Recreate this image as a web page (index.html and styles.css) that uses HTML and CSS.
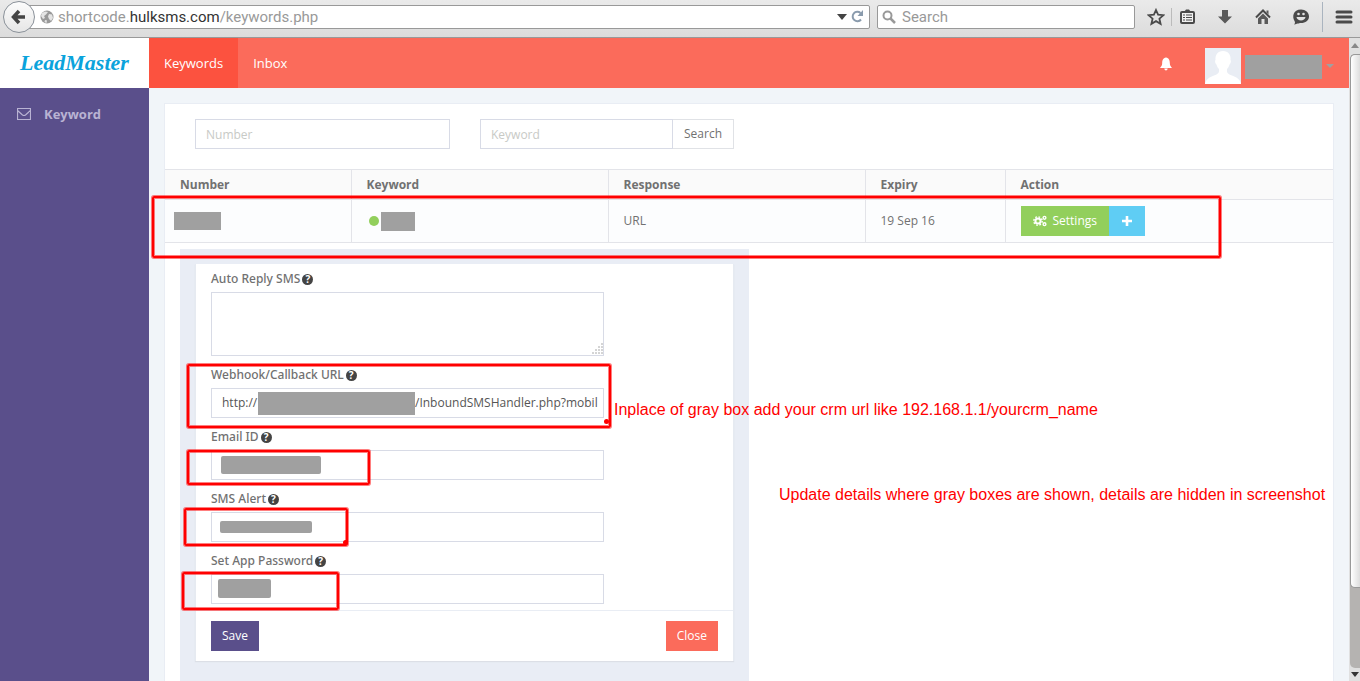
FILE: index.html
```html
<!DOCTYPE html>
<html lang="en">
	<head>
		<meta charset="utf-8">
		<title>Keywords</title>
		<link rel="stylesheet" href="styles.css">
	</head>
	<body>
		<!-- browser toolbar -->
		<div class="toolbar">
			<button class="back" aria-label="Back">
				<svg width="16" height="16" viewBox="0 0 16 16"><path d="M8 2L2.500 8L8 14M3 8H14" fill="none" stroke="#444" stroke-width="3.500"/></svg>
			</button>
			<div class="address">
				<svg width="14" height="14" viewBox="0 0 14 14"><circle cx="7" cy="7" r="6.500" fill="#999"/><path d="M2 3L5 1.500L8 2L6 4.500L4 6L5 8L3 9L1 6ZM9 4L12 4.500L13 8L11 11L9 9L8 6.500ZM5 10L7 10.500L6.500 13L4.500 12Z" fill="#e4e4e4"/></svg>
				<span class="url">shortcode.<b>hulksms.com</b>/keywords.php</span>
				<svg width="10" height="6" viewBox="0 0 10 6"><path d="M0 0H10L5 6Z" fill="#444"/></svg>
				<svg width="13" height="13" viewBox="0 0 13 13"><path d="M10 9.500A4.700 4.700 0 1 1 9.500 3" fill="none" stroke="#8a9bad" stroke-width="2"/><path d="M12 0V6H6.500Z" fill="#8a9bad"/></svg>
			</div>
			<div class="search">
				<svg width="14" height="14" viewBox="0 0 14 14"><circle cx="5.500" cy="5.500" r="4" fill="none" stroke="#999" stroke-width="2"/><path d="M8.500 8.500L13 13" stroke="#999" stroke-width="2.500"/></svg>
				<input type="text" placeholder="Search" aria-label="Web search">
			</div>
			<div class="tools">
				<svg width="18" height="18" viewBox="0 0 18 18"><path d="M9 2L11.100 6.700L16.300 7.200L12.400 10.700L13.600 15.800L9 13.100L4.400 15.800L5.600 10.700L1.700 7.200L6.900 6.700Z" fill="none" stroke="#4a4a4a" stroke-width="1.800"/></svg>
				<i class="sep"></i>
				<svg width="18" height="18" viewBox="0 0 18 18"><rect x="3" y="4" width="13" height="11" rx="1" fill="#f0f0f0" stroke="#4a4a4a" stroke-width="2"/><path d="M6 4L8 1.500H11L13 4Z" fill="#4a4a4a"/><path d="M5 7H7M8 7H14M5 9.500H7M8 9.500H14M5 12H7M8 12H14" stroke="#4a4a4a" stroke-width="1.200"/></svg>
				<svg width="18" height="18" viewBox="0 0 18 18"><path d="M6 2H12V8.500H16L9 15.500L2 8.500H6Z" fill="#5a5a5a"/></svg>
				<svg width="18" height="18" viewBox="0 0 18 18"><path d="M2 9.500L9 2.500L16 9.500" fill="none" stroke="#4a4a4a" stroke-width="2"/><path d="M4 10.500L9 5.500L14 10.500V16H10.500V11H7.500V16H4ZM12.500 2.500H14.500V6.500L12.500 4.500Z" fill="#5a5a5a"/></svg>
				<svg width="18" height="18" viewBox="0 0 18 18"><path d="M9 1.500C13.500 1.500 17 4.500 17 8.500C17 12.500 13.500 15 9 15C7.500 15 6.500 15.500 2 16.500C3.500 15 3 14 2.500 13C0 9 1 1.500 9 1.500Z" fill="#4a4a4a"/><circle cx="6.500" cy="6" r="1.300" fill="#e2e2e2"/><circle cx="11.500" cy="6" r="1.300" fill="#e2e2e2"/><path d="M4.500 9H13.500C13 13.500 5 13.500 4.500 9Z" fill="#e2e2e2"/></svg>
				<i class="sep tall"></i>
				<svg width="18" height="18" viewBox="0 0 18 18"><path d="M2 4H16M2 9H16M2 14H16" stroke="#4a4a4a" stroke-width="3" stroke-linecap="round"/></svg>
			</div>
		</div>

		<div class="page">
			<div class="app">
				<header class="header">
					<a class="logo" href="#">LeadMaster</a>
					<nav class="nav">
						<a class="active" href="#">Keywords</a>
						<a href="#">Inbox</a>
					</nav>
					<div class="user">
						<svg class="bell" width="14" height="14" viewBox="0 0 14 14"><path d="M7 0.500C10 1 10.800 3.500 10.800 6C10.800 8.500 12 9.500 13 11H1C2 9.500 3.200 8.500 3.200 6C3.200 3.500 4 1 7 0.500ZM5.300 11.500H8.700C8.500 14 5.500 14 5.300 11.500Z" fill="#fff"/></svg>
						<svg width="36" height="36" viewBox="0 0 36 36"><path d="M0 0H36V36H0Z" fill="#e9edf4"/><path d="M18 3C23.500 3 26 7 25.500 12C26.500 13 25.500 16 24.500 16.500C24 19 23 20 22 21C21.500 25 23 26 27 27.500C32 29.500 35 31 36 36H0C1 31 4 29.500 9 27.500C13 26 14.500 25 14 21C13 20 12 19 11.500 16.500C10.500 16 9.500 13 10.500 12C10 7 12.500 3 18 3Z" fill="#fff"/></svg>
						<span class="hidden name"></span>
						<i class="caret"></i>
					</div>
				</header>

				<div class="body">
					<aside class="sidebar">
						<a href="#">
							<svg width="14" height="12" viewBox="0 0 14 12"><path d="M0.500 0.500H13.500V11.500H0.500ZM0.500 2.500L5.500 7Q7 8 8.500 7L13.500 2.500" fill="none" stroke="#b9b3d3" stroke-width="1.200"/></svg>
							Keyword
						</a>
					</aside>

					<main class="content">
						<section class="card">
							<form class="filter">
								<input class="number" type="text" placeholder="Number" aria-label="Number">
								<div class="group">
									<input type="text" placeholder="Keyword" aria-label="Keyword">
									<button class="btn" type="button">Search</button>
								</div>
							</form>

							<table class="list">
								<colgroup>
									<col class="c1"><col class="c2"><col class="c3"><col class="c4"><col>
								</colgroup>
								<thead>
									<tr><th>Number</th><th>Keyword</th><th>Response</th><th>Expiry</th><th>Action</th></tr>
								</thead>
								<tbody>
									<tr>
										<td class="first"><span class="hidden num"></span></td>
										<td><div class="status"><i class="dot"></i><span class="hidden key"></span></div></td>
										<td>URL</td>
										<td>19 Sep 16</td>
										<td>
											<div class="actions">
												<button class="btn green" type="button">
													<svg width="14" height="12" viewBox="0 0 14 12"><circle cx="5" cy="6" r="2.600" fill="none" stroke="#fff" stroke-width="2"/><circle cx="5" cy="6" r="4.200" fill="none" stroke="#fff" stroke-width="1.400" stroke-dasharray="1.700 1.600"/><circle cx="11.500" cy="2.800" r="1.400" fill="none" stroke="#fff" stroke-width="1.400"/><circle cx="11.500" cy="9.200" r="1.400" fill="none" stroke="#fff" stroke-width="1.400"/></svg>
													Settings
												</button>
												<button class="btn blue" type="button" aria-label="Add">
													<svg width="10" height="10" viewBox="0 0 10 10"><path d="M5 0V10M0 5H10" stroke="#fff" stroke-width="2.600"/></svg>
												</button>
											</div>
										</td>
									</tr>
								</tbody>
							</table>
							<i class="mark mark-row"></i>

							<div class="detail">
								<form class="panel">
									<div class="fields">
										<div class="field">
											<label for="reply">Auto Reply SMS<i class="help">?</i></label>
											<textarea id="reply"></textarea>
											<svg class="grip" width="12" height="12" viewBox="0 0 12 12"><path d="M10 1H12M7 4H9M10 4H12M4 7H6M7 7H9M10 7H12M1 10H3M4 10H6M7 10H9M10 10H12" stroke="#aaa" stroke-width="1"/></svg>
										</div>
										<div class="field">
											<label for="webhook">Webhook/Callback URL<i class="help">?</i></label>
											<div class="hook">
												<input class="host" id="webhook" type="text" value="http://1">
												<span class="hidden crm"></span>
												<input class="path" type="text" value="/InboundSMSHandler.php?mobil" aria-label="Callback path">
											</div>
											<i class="mark mark-hook"></i>
											<p class="note note-hook">Inplace of gray box add your crm url like 192.168.1.1/yourcrm_name</p>
										</div>
										<div class="field">
											<label for="email">Email ID<i class="help">?</i></label>
											<input id="email" type="text">
											<span class="hidden over over-email"></span>
											<i class="mark mark-email"></i>
											<p class="note note-hidden">Update details where gray boxes are shown, details are hidden in screenshot</p>
										</div>
										<div class="field">
											<label for="alert">SMS Alert<i class="help">?</i></label>
											<input id="alert" type="text">
											<span class="hidden over over-alert"></span>
											<i class="mark mark-alert"></i>
										</div>
										<div class="field">
											<label for="pass">Set App Password<i class="help">?</i></label>
											<input id="pass" type="text">
											<span class="hidden over over-pass"></span>
											<i class="mark mark-pass"></i>
										</div>
									</div>
									<div class="footer">
										<button class="btn purple" type="button">Save</button>
										<button class="btn red" type="button">Close</button>
									</div>
								</form>
							</div>
						</section>
					</main>
				</div>
			</div>

			<!-- scrollbar -->
			<div class="scroll">
				<i class="up"></i>
				<div class="track"><div class="thumb"></div></div>
				<i class="down"></i>
			</div>
		</div>
	</body>
</html>
```
FILE: styles.css
```css
* {
	margin: 0;
	padding: 0;
	box-sizing: border-box;
}

body {
	display: flex;
	flex-direction: column;
	height: 100vh;
	overflow: hidden;
	font: 12px/18px "Open Sans", sans-serif;
	color: #717171;
}

a {
	text-decoration: none;
}

button,
input,
textarea {
	font: inherit;
	color: #555;
}

svg {
	flex: none;
}

/* browser toolbar */
.toolbar {
	display: flex;
	align-items: center;
	height: 38px;
	padding: 0 7px 4px 3px;
	background: linear-gradient(#eaeaea, #dcdcdc);
	border-bottom: 1px solid #999;
	flex: none;
}

.back {
	display: flex;
	align-items: center;
	justify-content: center;
	width: 32px;
	height: 32px;
	border: 1px solid #8a9199;
	border-radius: 50%;
	background: linear-gradient(#fcfcfc, #e6e6e6);
	z-index: 1;
}

.address,
.search {
	display: flex;
	align-items: center;
	height: 24px;
	background: #fff;
	border: 1px solid #999;
	border-radius: 2px;
}

.address {
	flex: 1;
	gap: 4px;
	margin-left: -8px;
	padding: 0 5px 0 12px;
}

.url {
	flex: 1;
	font: 15px/20px Roboto, sans-serif;
	color: #999;
}

.url b {
	font-weight: normal;
	color: #333;
}

.search {
	width: 258px;
	margin-left: 7px;
	padding: 0 4px;
	gap: 6px;
}

.search input {
	width: 100%;
	border: 0;
	background: none;
	font: 15px/20px Roboto, sans-serif;
}

.search input::placeholder {
	color: #999;
}

.tools {
	display: flex;
	align-items: center;
	gap: 20px;
	margin-left: 12px;
}

.sep {
	width: 1px;
	height: 18px;
	margin: 0 -14px;
	background: #bbb;
}

.sep.tall {
	height: 30px;
	margin: 0 -8px;
	background: #aab4bf;
}

/* app */
.page {
	display: flex;
	flex: 1;
	min-height: 0;
}

.app {
	display: flex;
	flex-direction: column;
	flex: 1;
	min-width: 0;
}

.header {
	display: flex;
	height: 50px;
	background: #fb6b5b;
	font-size: 13px;
	flex: none;
}

.logo {
	width: 149px;
	background: #fff;
	color: #0aa3dc;
	font: italic bold 22px/50px "Liberation Serif", serif;
	text-align: center;
}

.nav {
	display: flex;
	flex: 1;
}

.nav a {
	padding: 0 15px;
	color: #fff;
	line-height: 50px;
}

.nav .active {
	background: #fc523f;
}

.user {
	display: flex;
	align-items: center;
	padding: 6px 15px 0 0;
}

.bell {
	margin: 0 32px 4px 0;
}

.hidden {
	display: block;
	background: #a0a0a0;
}

.name {
	width: 77px;
	height: 24px;
	margin: 2px 4px 0;
}

.caret {
	border: 4px solid transparent;
	border-top-color: #a0a0a0;
	border-bottom: 0;
}

.body {
	display: flex;
	flex: 1;
	min-height: 0;
}

.sidebar {
	width: 149px;
	background: #5a4f8b;
	flex: none;
}

.sidebar a {
	display: flex;
	align-items: center;
	gap: 13px;
	padding: 16px 17px;
	color: #b9b3d3;
	font-size: 13px;
	font-weight: bold;
	line-height: 20px;
}

.content {
	flex: 1;
	min-width: 0;
	padding: 15px 15px 0;
	background: #f1f5f9;
}

.card {
	position: relative;
	height: 100%;
	background: #fff;
	border: 1px solid #e9edf4;
	border-bottom: 0;
}

.filter {
	display: flex;
	gap: 30px;
	padding: 15px 30px 20px;
}

.filter input,
.field > input,
.field textarea,
.hook {
	height: 30px;
	padding: 0 10px;
	border: 1px solid #d8dbe6;
	background: #fff;
}

.filter input::placeholder {
	color: #c8cac6;
}

.number {
	width: 255px;
}

.group {
	display: flex;
	width: 254px;
}

.group input {
	flex: 1;
	min-width: 0;
}

.btn {
	height: 30px;
	padding: 0 11px;
	border: 0;
	color: #fff;
}

.group .btn {
	border: 1px solid #e0e2e6;
	border-left: 0;
	background: #fff;
	color: #717171;
}

.list {
	width: 100%;
	border-collapse: collapse;
	table-layout: fixed;
}

.c1 {
	width: 186px;
}

.c2,
.c3 {
	width: 257px;
}

.c4 {
	width: 140px;
}

.list th,
.list td {
	height: 30px;
	padding: 0 15px;
	border: 1px solid #e3e4e9;
	border-width: 1px 0 1px 1px;
	text-align: left;
}

.list th {
	background: #fafafa;
}

.list td {
	height: 43px;
	background: #fcfdfe;
}

.list th:first-child,
.list td:first-child {
	border-left: 0;
}

.list .first {
	padding-left: 9px;
}

.num {
	width: 47px;
	height: 18px;
}

.status {
	display: flex;
	align-items: center;
	padding-left: 2px;
	gap: 2px;
}

.dot {
	width: 10px;
	height: 10px;
	border-radius: 50%;
	background: #92cf5c;
}

.key {
	width: 34px;
	height: 19px;
}

.actions {
	display: flex;
}

.green,
.blue {
	display: flex;
	align-items: center;
	gap: 6px;
}

.green {
	padding: 0 12px;
	background: #92cf5c;
}

.blue {
	padding: 0 13px;
	background: #5fcdf4;
}

.purple {
	background: #5a4f8b;
}

.red {
	background: #fb6b5b;
}

/* settings of one keyword */
.detail {
	width: 569px;
	height: 460px;
	margin: 6px 15px 0;
	padding: 15px;
	background: #e9edf5;
}

.panel {
	background: #fff;
	border: 1px solid #e6eaf1;
	border-width: 0 1px;
	box-shadow: 0 1px 1px #dcdfe6;
}

.fields {
	padding: 6px 15px;
}

.field {
	position: relative;
	width: 393px;
	margin-bottom: 10px;
}

.field:last-child {
	margin-bottom: 0;
}

.field label {
	display: flex;
	align-items: center;
	gap: 2px;
	margin-bottom: 4px;
	font-family: "Noto Sans", sans-serif;
	font-weight: 500;
}

.help {
	width: 11px;
	height: 11px;
	border-radius: 50%;
	background: #444;
	color: #fff;
	font: bold 10px/11px "Open Sans", sans-serif;
	text-align: center;
}

.field > input,
.field textarea {
	display: block;
	width: 100%;
}

.field textarea {
	height: 64px;
	resize: none;
}

.grip {
	position: absolute;
	right: 1px;
	bottom: 1px;
}

.hook {
	display: flex;
	align-items: center;
	padding-right: 4px;
}

.hook input {
	border: 0;
	background: none;
}

.host {
	width: 36px;
}

.crm {
	width: 157px;
	height: 23px;
	flex: none;
}

.path {
	flex: 1;
	min-width: 0;
}

.footer {
	display: flex;
	justify-content: space-between;
	padding: 10px 15px;
	border-top: 1px solid #e9edf4;
}

/* marks drawn over the page */
.mark,
.over,
.note {
	position: absolute;
}

.mark {
	border: 2px solid #f00;
	border-radius: 2px;
	box-shadow: 0 0 0 1px rgba(255, 0, 0, .5), inset 0 0 0 1px rgba(255, 0, 0, .5);
}

.over {
	border-radius: 2px;
}

.mark-row {
	left: -13px;
	top: 92px;
	width: 1069px;
	height: 62px;
}

.mark-hook {
	left: -24px;
	top: -2px;
	width: 424px;
	height: 64px;
}

.mark-hook::after,
.mark-alert::after {
	content: "";
	position: absolute;
	right: 0;
	bottom: 2px;
	width: 5px;
	height: 5px;
	border-radius: 50%;
	background: #f00;
}

.mark-alert::after {
	right: -2px;
	bottom: -1px;
}

.mark-email {
	left: -24px;
	top: 22px;
	width: 183px;
	height: 35px;
}

.mark-alert {
	left: -27px;
	top: 18px;
	width: 164px;
	height: 38px;
}

.mark-pass {
	left: -29px;
	top: 20px;
	width: 157px;
	height: 38px;
}

.over-email {
	left: 10px;
	top: 28px;
	width: 100px;
	height: 18px;
}

.over-alert {
	left: 9px;
	top: 31px;
	width: 92px;
	height: 12px;
}

.over-pass {
	left: 7px;
	top: 27px;
	width: 53px;
	height: 19px;
}

.note {
	color: #f00;
	font: 16px/18px "Liberation Sans", sans-serif;
	white-space: nowrap;
}

.note-hook {
	left: 403px;
	top: 35px;
}

.note-hidden {
	left: 568px;
	top: 58px;
}

/* scrollbar */
.scroll {
	display: flex;
	flex-direction: column;
	align-items: center;
	justify-content: space-between;
	width: 11px;
	padding: 5px 0 4px 1px;
	background: #e0e0e0;
	flex: none;
}

.track {
	flex: 1;
	width: 100%;
	margin: 6px 0 4px;
	background: #b5b3b1;
	border-radius: 5px 0 0 5px;
}

.thumb {
	height: 87%;
	border: 1px solid #999;
	border-right: 0;
	border-radius: 5px 0 0 5px;
	background: linear-gradient(to right, #fff, #ddd);
}

.up,
.down {
	border: 4px solid transparent;
}

.up {
	border-top: 0;
	border-bottom: 5px solid #888;
}

.down {
	border-bottom: 0;
	border-top: 5px solid #333;
}
```
